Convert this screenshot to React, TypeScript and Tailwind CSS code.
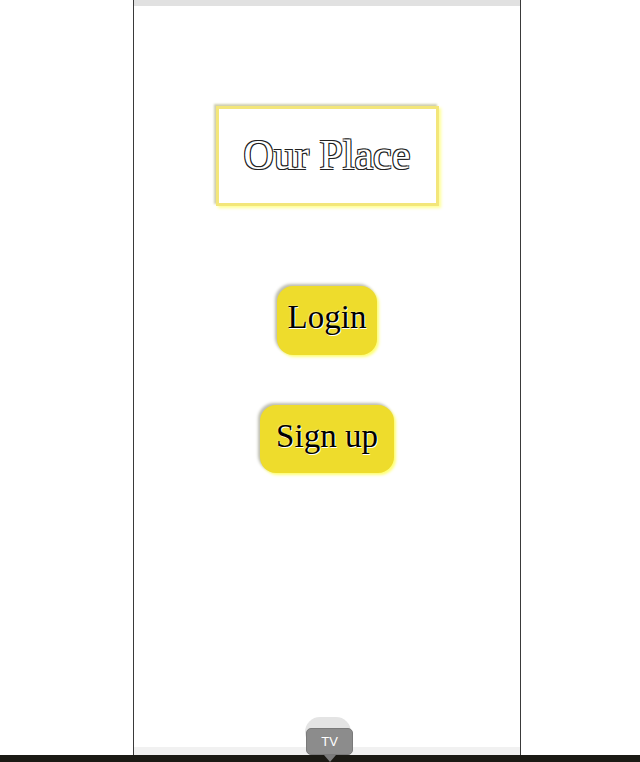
export default function App() {
  return (
    <div className="relative flex h-[762px] w-[640px] flex-col overflow-hidden bg-white font-['Liberation_Serif',serif]">
      <div className="ml-[133px] flex h-[755px] w-[388px] flex-col border-x border-[#3a3a3a]">
        {/* top bar */}
        <div className="h-[6px] bg-[#e1e1e1]" />

        <div className="flex flex-1 flex-col items-center pt-[100px]">
          {/* title */}
          <div className="flex h-[100px] w-[223px] items-center justify-center border-[3px] border-[#f3e67a] pb-[2px] shadow-[-2px_-2px_2px_#cfcfb0,2px_2px_3px_#ffff90]">
            <span className="text-[42px] leading-none text-white [text-shadow:-1px_-1px_0_#222,1px_-1px_0_#222,-1px_1px_0_#222,1px_1px_0_#222]">
              Our Place
            </span>
          </div>

          {/* buttons */}
          <div className="mt-[80px] flex flex-col items-center gap-[50px]">
            <button className="flex h-[69px] items-center rounded-[16px] bg-[#eedc2c] px-[11px] pb-[6px] text-[33px] leading-none text-black shadow-[-2px_-2px_3px_#bdbdb0,2px_2px_3px_#ffff70] [text-shadow:1px_1px_0_#fff,-1px_-1px_0_#fff3]">
              Login
            </button>
            <button className="flex h-[68px] items-center rounded-[16px] bg-[#eedc2c] px-[16px] pb-[6px] text-[33px] leading-none text-black shadow-[-2px_-2px_3px_#bdbdb0,2px_2px_3px_#ffff70] [text-shadow:1px_1px_0_#fff,-1px_-1px_0_#fff3]">
              Sign up
            </button>
          </div>
        </div>

        {/* bottom bar */}
        <div className="h-[8px] bg-[#f1f1f1]" />
      </div>

      {/* dark strip */}
      <div className="h-[7px] bg-[#1b1a14]" />

      {/* ghost control + tooltip */}
      <div className="absolute left-[305px] top-[717px] h-[30px] w-[46px] rounded-full bg-[#e4e4e4]" />
      <div className="absolute left-[306px] top-[728px] flex flex-col items-center">
        <div className="flex h-[27px] w-[47px] items-center justify-center rounded-[5px] border border-[#7a7a7a] bg-[#8c8c8c] font-['Liberation_Sans',sans-serif] text-[13px] text-white">
          TV
        </div>
        <div className="h-0 w-0 border-x-[6px] border-t-[7px] border-x-transparent border-t-[#7c7c7c]" />
      </div>
    </div>
  )
}
